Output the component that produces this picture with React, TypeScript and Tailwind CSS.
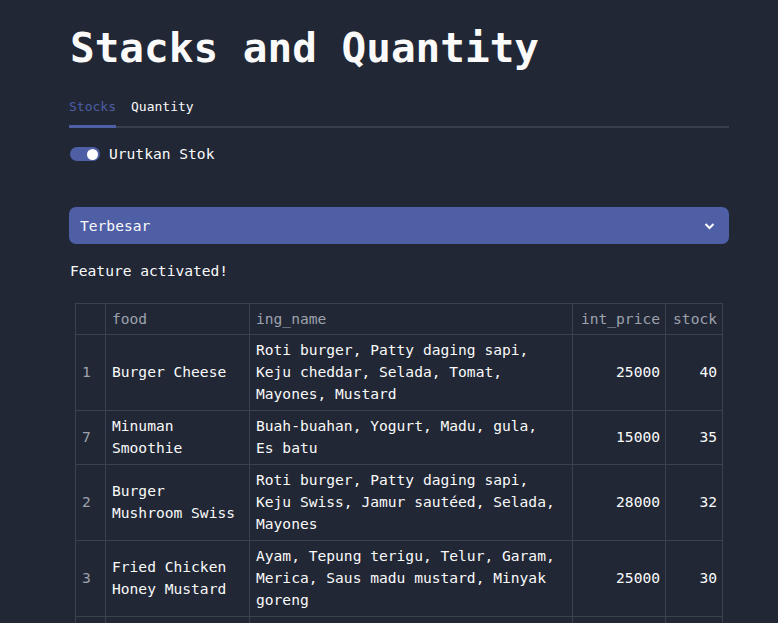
import React from "react";

const rows = [
  { i: "1", food: ["Burger Cheese"], ing: ["Roti burger, Patty daging sapi,", "Keju cheddar, Selada, Tomat,", "Mayones, Mustard"], price: "25000", stock: "40" },
  { i: "7", food: ["Minuman", "Smoothie"], ing: ["Buah-buahan, Yogurt, Madu, gula,", "Es batu"], price: "15000", stock: "35" },
  { i: "2", food: ["Burger", "Mushroom Swiss"], ing: ["Roti burger, Patty daging sapi,", "Keju Swiss, Jamur sautéed, Selada,", "Mayones"], price: "28000", stock: "32" },
  { i: "3", food: ["Fried Chicken", "Honey Mustard"], ing: ["Ayam, Tepung terigu, Telur, Garam,", "Merica, Saus madu mustard, Minyak", "goreng"], price: "25000", stock: "30" },
  { i: "5", food: ["Nasi Goreng"], ing: ["Nasi, Telur, Kecap, Bawang,", "Garam"], price: "20000", stock: "28" },
];

const Lines = ({ l }: { l: string[] }) => (
  <>
    {l.map((s, k) => (
      <div key={k} className="whitespace-pre">{s}</div>
    ))}
  </>
);

export default function App() {
  return (
    <div
      className="min-h-screen bg-[#212735] text-[#fafafa]"
      style={{ fontFamily: '"DejaVu Sans Mono", monospace' }}
    >
      <div className="w-[660px] ml-[69px] pt-[26px]">
        <h1 className="text-[41px] leading-[44px] font-bold pl-[1px]">Stacks and Quantity</h1>
        <div className="mt-[29px] flex border-b-2 border-[#3a3f4d] text-[13px] leading-[16px]">
          <div className="text-[#4e5fa6] pb-[10px] border-b-[3px] border-[#4e5fa6] mb-[-2px] w-[47px]">Stocks</div>
          <div className="ml-[15px] pb-[10px]">Quantity</div>
        </div>
        <div className="mt-[18px] flex items-center h-[16px] text-[14.6px]">
          <div className="w-[30px] h-[14px] rounded-full bg-[#4e5fa6] ml-[1px] flex items-center justify-end pr-[2px]">
            <div className="w-[11px] h-[11px] rounded-full bg-white"></div>
          </div>
          <span className="ml-[9px]">Urutkan Stok</span>
        </div>
        <div className="mt-[45px] h-[37px] rounded-[7px] bg-[#4e5fa6] flex items-center justify-between pl-[11px] pr-[14px] text-[14.6px]">
          <span>Terbesar</span>
          <svg width="11" height="8" viewBox="0 0 11 8" fill="none">
            <path d="M1.5 2 L5.5 6 L9.5 2" stroke="white" strokeWidth="2" />
          </svg>
        </div>
        <div className="mt-[17px] text-[14.6px] leading-[20px] pl-[1px]">Feature activated!</div>
        <table className="mt-[22px] ml-[6px] w-[647px] border-collapse text-[14.6px] leading-[22px] table-fixed">
          <colgroup>
            <col className="w-[30px]" />
            <col className="w-[144px]" />
            <col className="w-[323px]" />
            <col className="w-[93px]" />
            <col className="w-[57px]" />
          </colgroup>
          <thead>
            <tr className="text-[#9da2ad] h-[31px]">
              <th className="border border-[#3b4150] font-normal"></th>
              <th className="border border-[#3b4150] font-normal text-left px-[6px]">food</th>
              <th className="border border-[#3b4150] font-normal text-left px-[6px]">ing_name</th>
              <th className="border border-[#3b4150] font-normal text-right px-[5px]">int_price</th>
              <th className="border border-[#3b4150] font-normal text-right px-[5px]">stock</th>
            </tr>
          </thead>
          <tbody>
            {rows.map((r) => (
              <tr key={r.i}>
                <td className="border border-[#3b4150] text-[#9da2ad] px-[6px] pt-[4px] pb-[5px]">{r.i}</td>
                <td className="border border-[#3b4150] px-[6px] pt-[4px] pb-[5px]"><Lines l={r.food} /></td>
                <td className="border border-[#3b4150] px-[6px] pt-[4px] pb-[5px]"><Lines l={r.ing} /></td>
                <td className="border border-[#3b4150] px-[5px] pt-[4px] pb-[5px] text-right">{r.price}</td>
                <td className="border border-[#3b4150] px-[5px] pt-[4px] pb-[5px] text-right">{r.stock}</td>
              </tr>
            ))}
          </tbody>
        </table>
      </div>
    </div>
  );
}
